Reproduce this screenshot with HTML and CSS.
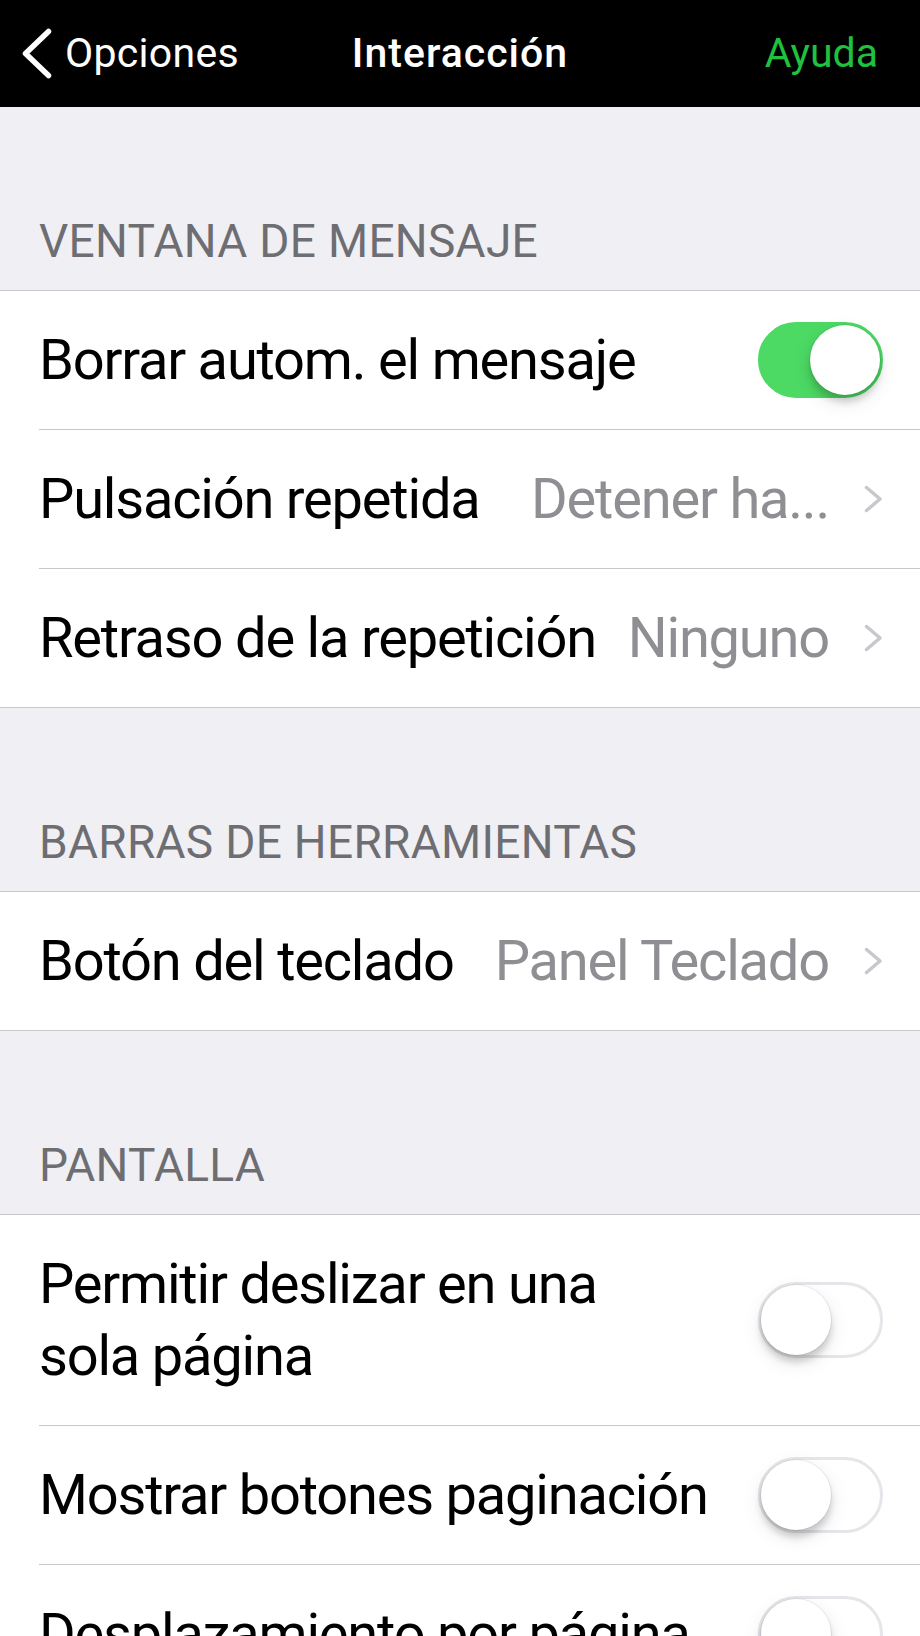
FILE: index.html
```html
<!DOCTYPE html>
<html lang="es">
<head>
<meta charset="utf-8">
<title>Interacción</title>
<link rel="stylesheet" href="styles.css">
</head>
<body>
<header class="nav">
  <div class="nav-left">
    <svg class="back-icon" viewBox="0 0 30 51" width="30" height="51"><polyline points="26.5,3.5 3.5,25.5 26.5,47.5" fill="none" stroke="#fff" stroke-width="5.5" stroke-linecap="round" stroke-linejoin="round"/></svg>
    <span class="back-text">Opciones</span>
  </div>
  <div class="nav-title">Interacción</div>
  <div class="nav-right">Ayuda</div>
</header>

<main class="content">
  <div class="section-header">VENTANA DE MENSAJE</div>
  <ul class="group">
    <li class="row">
      <span class="label">Borrar autom. el mensaje</span>
      <span class="toggle on"><span class="knob"></span></span>
    </li>
    <li class="row">
      <span class="label">Pulsación repetida</span>
      <span class="value">Detener ha...</span>
      <svg class="chevron" viewBox="0 0 19 28" width="19" height="28"><polyline points="2.5,2.5 16,14 2.5,25.5" fill="none" stroke="#c7c7cc" stroke-width="3.5" stroke-linecap="round" stroke-linejoin="round"/></svg>
    </li>
    <li class="row">
      <span class="label">Retraso de la repetición</span>
      <span class="value">Ninguno</span>
      <svg class="chevron" viewBox="0 0 19 28" width="19" height="28"><polyline points="2.5,2.5 16,14 2.5,25.5" fill="none" stroke="#c7c7cc" stroke-width="3.5" stroke-linecap="round" stroke-linejoin="round"/></svg>
    </li>
  </ul>

  <div class="section-header">BARRAS DE HERRAMIENTAS</div>
  <ul class="group">
    <li class="row">
      <span class="label">Botón del teclado</span>
      <span class="value">Panel Teclado</span>
      <svg class="chevron" viewBox="0 0 19 28" width="19" height="28"><polyline points="2.5,2.5 16,14 2.5,25.5" fill="none" stroke="#c7c7cc" stroke-width="3.5" stroke-linecap="round" stroke-linejoin="round"/></svg>
    </li>
  </ul>

  <div class="section-header">PANTALLA</div>
  <ul class="group">
    <li class="row">
      <span class="label wrap">Permitir deslizar en una sola página</span>
      <span class="toggle"><span class="knob"></span></span>
    </li>
    <li class="row">
      <span class="label">Mostrar botones paginación</span>
      <span class="toggle"><span class="knob"></span></span>
    </li>
    <li class="row">
      <span class="label">Desplazamiento por página</span>
      <span class="toggle"><span class="knob"></span></span>
    </li>
  </ul>
</main>
</body>
</html>
```

FILE: styles.css
```css
* { box-sizing: border-box; }

html, body {
  margin: 0;
  padding: 0;
}

body {
  background: #efeff4;
  font-family: Roboto, "Noto Sans", "Liberation Sans", sans-serif;
  color: #000;
  width: 920px;
}

.nav {
  height: 107px;
  background: #000;
  display: grid;
  grid-template-columns: 1fr auto 1fr;
  align-items: center;
  font-size: 41px;
}

.nav-left {
  display: flex;
  align-items: center;
  padding-left: 22px;
  color: #fff;
}

.back-icon {
  display: block;
  margin-right: 13px;
}

.back-text {
  line-height: 1;
  letter-spacing: 0.3px;
}

.nav-title {
  color: #fff;
  font-weight: 500;
  line-height: 1;
  letter-spacing: 1px;
}

.nav-right {
  justify-self: end;
  padding-right: 42px;
  color: #1fc23f;
  line-height: 1;
}

.section-header {
  height: 183px;
  display: flex;
  align-items: flex-end;
  padding: 0 39px 26px;
  font-size: 46px;
  line-height: 46px;
  color: #6d6d72;
  letter-spacing: 0.3px;
}

.group {
  list-style: none;
  margin: 0;
  padding: 0 0 0 39px;
  background: #fff;
  border-top: 1px solid #c8c7cc;
  border-bottom: 1px solid #c8c7cc;
}

.row {
  display: flex;
  align-items: center;
  padding-right: 37px;
  border-bottom: 1px solid #c8c7cc;
  font-size: 56px;
  letter-spacing: -1.2px;
}

.row:last-child {
  border-bottom: none;
}

.label {
  line-height: 72px;
  padding: 33px 0;
  white-space: nowrap;
  flex: 0 0 auto;
}

.label.wrap {
  white-space: normal;
  flex: 0 1 auto;
  max-width: 640px;
}

.value {
  margin-left: auto;
  min-width: 0;
  color: #8e8e93;
  white-space: nowrap;
  overflow: hidden;
  text-overflow: ellipsis;
  padding-left: 20px;
}

.chevron {
  display: block;
  flex: 0 0 auto;
  margin-left: 35px;
}

.toggle {
  margin-left: auto;
  flex: 0 0 auto;
  width: 125px;
  height: 76px;
  border-radius: 38px;
  border: 3px solid #e5e5ea;
  background: #fff;
  position: relative;
}

.toggle .knob {
  position: absolute;
  top: 0;
  left: 0;
  width: 70px;
  height: 70px;
  border-radius: 50%;
  background: #fff;
  box-shadow: 0 7px 7px rgba(0, 0, 0, 0.16), 0 0 0 1px rgba(0, 0, 0, 0.06), 0 7px 20px rgba(0, 0, 0, 0.1);
}

.toggle.on {
  background: #4cd964;
  border-color: #4cd964;
}

.toggle.on .knob {
  left: 49px;
}
```
